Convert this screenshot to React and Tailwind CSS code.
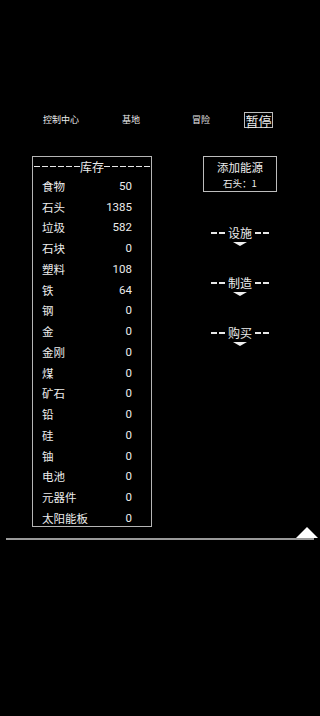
const items = [
  ["食物", 50],
  ["石头", 1385],
  ["垃圾", 582],
  ["石块", 0],
  ["塑料", 108],
  ["铁", 64],
  ["钢", 0],
  ["金", 0],
  ["金刚", 0],
  ["煤", 0],
  ["矿石", 0],
  ["铅", 0],
  ["硅", 0],
  ["铀", 0],
  ["电池", 0],
  ["元器件", 0],
  ["太阳能板", 0],
];

function Dashes({ count }) {
  return (
    <div className="flex items-center gap-[2px]">
      {Array.from({ length: count }).map((_, i) => (
        <span key={i} className="block w-[6px] h-[1.5px] bg-[#e8e8e8]" />
      ))}
    </div>
  );
}

function Section({ title }) {
  return (
    <div className="flex flex-col items-center">
      <div className="flex items-center gap-[2px]">
        <Dashes count={2} />
        <span className="text-[12px] leading-[16px] px-[1px]">{title}</span>
        <Dashes count={2} />
      </div>
      <div className="mt-[1px] w-0 h-0 border-l-[7px] border-r-[7px] border-t-[4px] border-l-transparent border-r-transparent border-t-[#f0f0f0]" />
    </div>
  );
}

export default function App() {
  return (
    <div
      className="w-[320px] h-[716px] bg-black text-[#ececec] overflow-hidden"
      style={{ fontFamily: '"Noto Sans CJK SC", "Noto Sans", sans-serif' }}
    >
      <div className="pt-[112px] flex items-center">
        <div className="ml-[26px] w-[70px] text-center text-[9px] leading-[16px]">控制中心</div>
        <div className="w-[70px] text-center text-[9px] leading-[16px]">基地</div>
        <div className="w-[70px] text-center text-[9px] leading-[16px]">冒险</div>
        <div className="ml-[8px] w-[29px] h-[16px] border border-[#bdbdbd] flex items-center justify-center text-[13px] leading-none">
          暂停
        </div>
      </div>

      <div className="flex mt-[28px]">
        <div className="ml-[32px] w-[120px] h-[371px] border border-[#b5b5b5] overflow-hidden">
          <div className="h-[19px] flex items-center justify-between px-[1px]">
            <Dashes count={6} />
            <span className="text-[12px] leading-none">库存</span>
            <Dashes count={6} />
          </div>
          {items.map(([name, n]) => (
            <div
              key={name}
              className="h-[20.75px] flex items-center justify-between pl-[9px] pr-[19px] text-[11.5px]"
            >
              <span>{name}</span>
              <span className="font-['Roboto']">{n}</span>
            </div>
          ))}
        </div>

        <div className="ml-[51px] w-[74px] flex flex-col items-center">
          <div className="w-[74px] h-[36px] border border-[#bdbdbd] flex flex-col items-center justify-center">
            <span className="text-[11.5px] leading-[17px]">添加能源</span>
            <span className="text-[9.5px] leading-[14px]">石头：1</span>
          </div>
          <div className="mt-[33px]"><Section title="设施" /></div>
          <div className="mt-[29px]"><Section title="制造" /></div>
          <div className="mt-[29px]"><Section title="购买" /></div>
        </div>
      </div>

      <div className="relative mt-[11px] ml-[6px] w-[308px] h-[1.5px] bg-[#9a9a9a]">
        <div className="absolute right-[-4px] bottom-[1.5px] w-0 h-0 border-l-[11px] border-r-[11px] border-b-[11px] border-l-transparent border-r-transparent border-b-white" />
      </div>
    </div>
  );
}
